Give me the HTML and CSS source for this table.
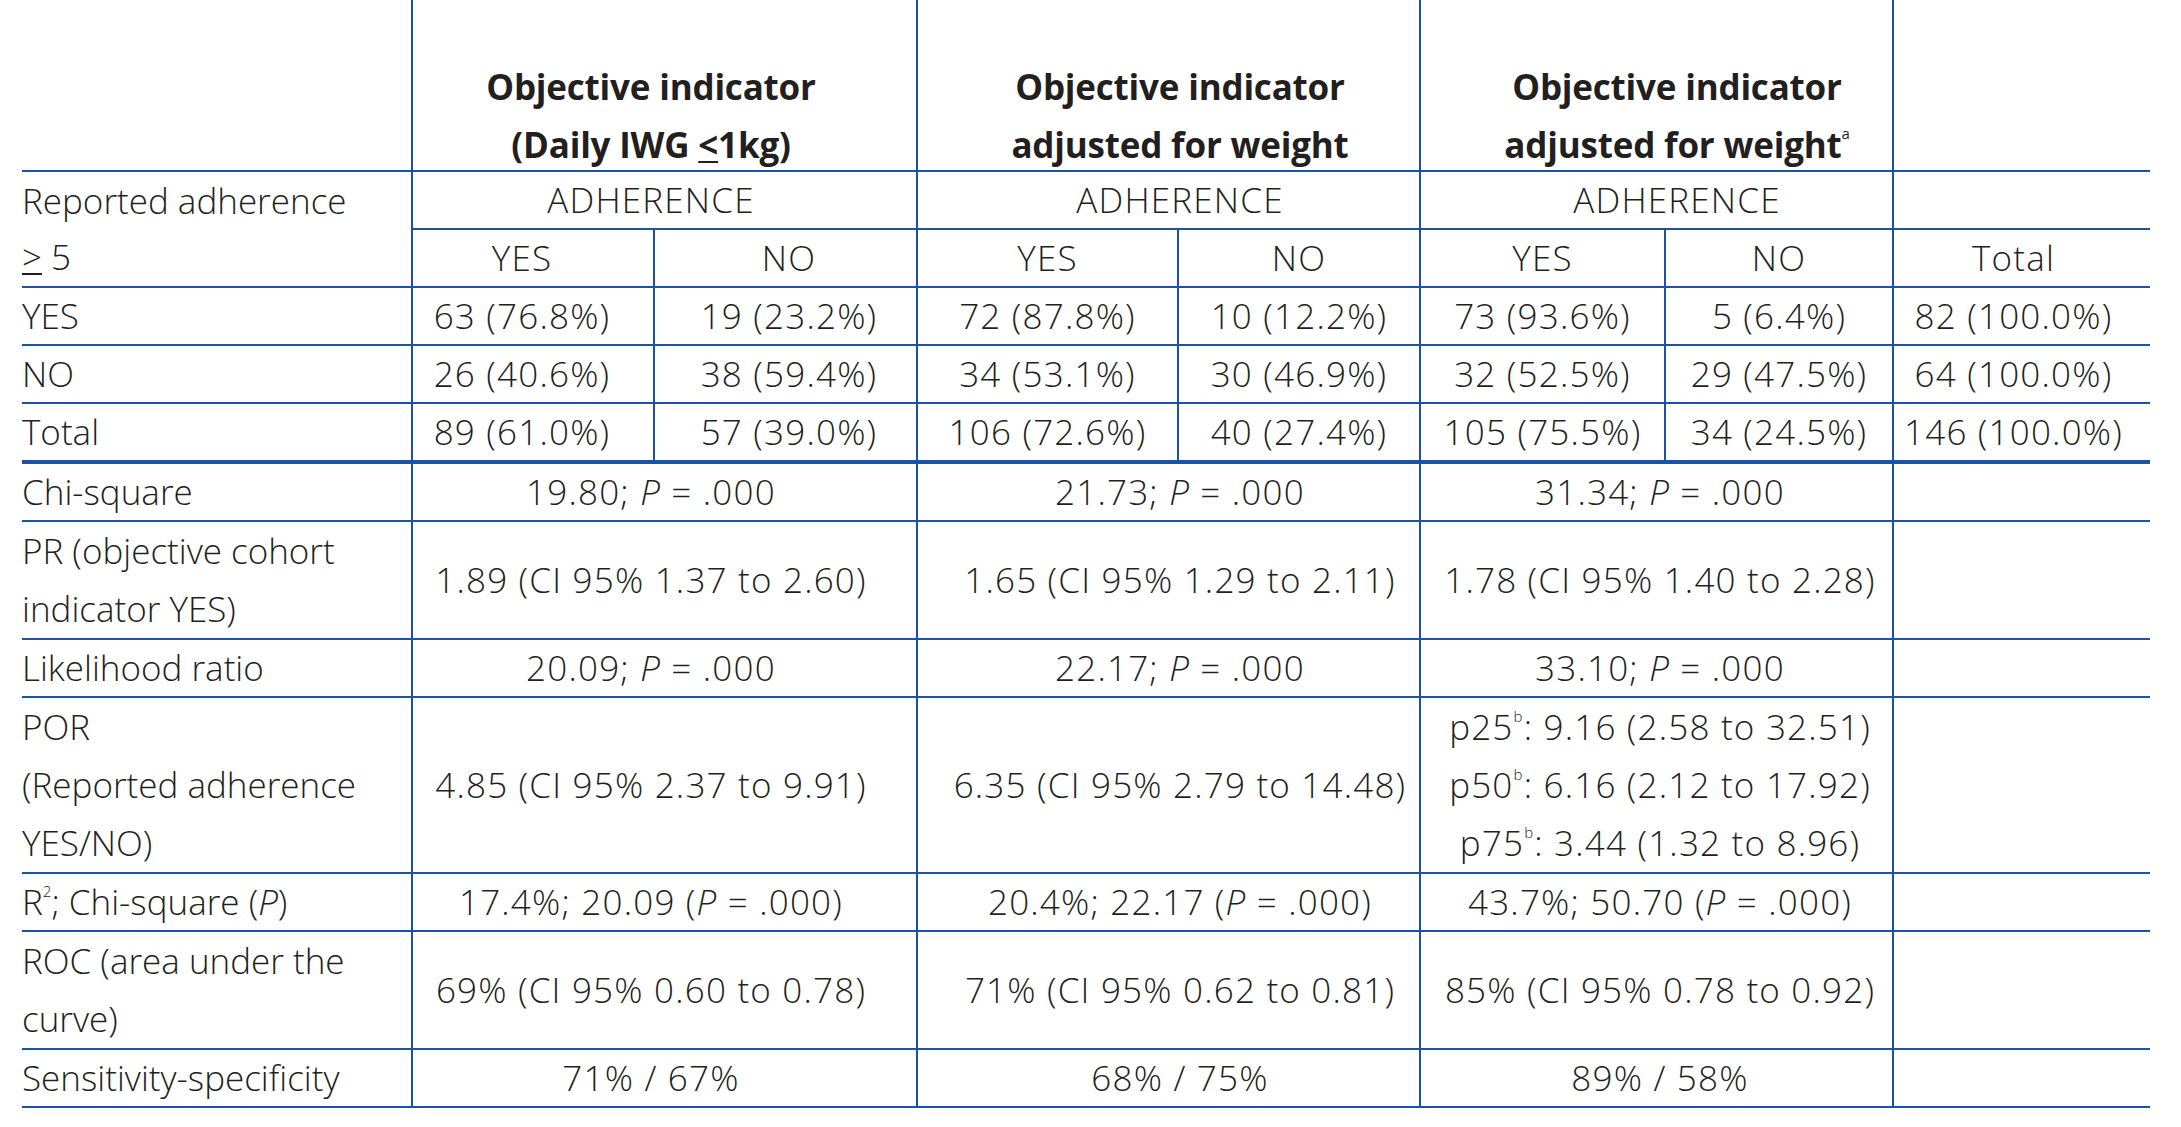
FILE: index.html
```html
<!DOCTYPE html>
<html lang="en">
<head>
<meta charset="utf-8">
<title>Adherence table</title>
<link rel="stylesheet" href="styles.css">
</head>
<body>
<table class="tbl">
  <colgroup>
    <col class="c0"><col class="c1"><col class="c2"><col class="c3"><col class="c4"><col class="c5"><col class="c6"><col class="c7">
  </colgroup>
  <tr class="head">
    <td class="lab"></td>
    <th colspan="2" class="bl g1"><span class="ht">Objective indicator<br>(Daily IWG <span class="ul">&lt;</span>1kg)</span></th>
    <th colspan="2" class="bl g2"><span class="ht">Objective indicator<br>adjusted for weight</span></th>
    <th colspan="2" class="bl g3h"><span class="ht">Objective indicator<br>adjusted for weight<sup class="sa">a</sup></span></th>
    <td class="bl"></td>
  </tr>
  <tr class="s">
    <td class="lab two" rowspan="2">Reported adherence<br><span class="ul">&gt;</span> 5</td>
    <td colspan="2" class="bl g1">ADHERENCE</td>
    <td colspan="2" class="bl g2">ADHERENCE</td>
    <td colspan="2" class="bl g3h">ADHERENCE</td>
    <td class="bl"></td>
  </tr>
  <tr class="s">
    <td class="bl y1">YES</td><td class="bl n1">NO</td>
    <td class="bl">YES</td><td class="bl">NO</td>
    <td class="bl">YES</td><td class="bl">NO</td>
    <td class="bl tot">Total</td>
  </tr>
  <tr class="s">
    <td class="lab">YES</td>
    <td class="bl y1">63 (76.8%)</td><td class="bl n1">19 (23.2%)</td>
    <td class="bl">72 (87.8%)</td><td class="bl">10 (12.2%)</td>
    <td class="bl">73 (93.6%)</td><td class="bl">5 (6.4%)</td>
    <td class="bl tot">82 (100.0%)</td>
  </tr>
  <tr class="s">
    <td class="lab">NO</td>
    <td class="bl y1">26 (40.6%)</td><td class="bl n1">38 (59.4%)</td>
    <td class="bl">34 (53.1%)</td><td class="bl">30 (46.9%)</td>
    <td class="bl">32 (52.5%)</td><td class="bl">29 (47.5%)</td>
    <td class="bl tot">64 (100.0%)</td>
  </tr>
  <tr class="s thick">
    <td class="lab">Total</td>
    <td class="bl y1">89 (61.0%)</td><td class="bl n1">57 (39.0%)</td>
    <td class="bl">106 (72.6%)</td><td class="bl">40 (27.4%)</td>
    <td class="bl">105 (75.5%)</td><td class="bl">34 (24.5%)</td>
    <td class="bl tot">146 (100.0%)</td>
  </tr>
  <tr class="s">
    <td class="lab">Chi-square</td>
    <td colspan="2" class="bl g1">19.80; <i>P</i> = .000</td>
    <td colspan="2" class="bl g2">21.73; <i>P</i> = .000</td>
    <td colspan="2" class="bl g3">31.34; <i>P</i> = .000</td>
    <td class="bl"></td>
  </tr>
  <tr>
    <td class="lab">PR (objective cohort<br>indicator YES)</td>
    <td colspan="2" class="bl g1">1.89 (CI 95% 1.37 to 2.60)</td>
    <td colspan="2" class="bl g2">1.65 (CI 95% 1.29 to 2.11)</td>
    <td colspan="2" class="bl g3">1.78 (CI 95% 1.40 to 2.28)</td>
    <td class="bl"></td>
  </tr>
  <tr class="s">
    <td class="lab">Likelihood ratio</td>
    <td colspan="2" class="bl g1">20.09; <i>P</i> = .000</td>
    <td colspan="2" class="bl g2">22.17; <i>P</i> = .000</td>
    <td colspan="2" class="bl g3">33.10; <i>P</i> = .000</td>
    <td class="bl"></td>
  </tr>
  <tr>
    <td class="lab">POR<br>(Reported adherence<br>YES/NO)</td>
    <td colspan="2" class="bl g1">4.85 (CI 95% 2.37 to 9.91)</td>
    <td colspan="2" class="bl g2">6.35 (CI 95% 2.79 to 14.48)</td>
    <td colspan="2" class="bl g3">p25<sup class="sb">b</sup>: 9.16 (2.58 to 32.51)<br>p50<sup class="sb">b</sup>: 6.16 (2.12 to 17.92)<br>p75<sup class="sb">b</sup>: 3.44 (1.32 to 8.96)</td>
    <td class="bl"></td>
  </tr>
  <tr class="s">
    <td class="lab">R<sup class="sb">2</sup>; Chi-square (<i>P</i>)</td>
    <td colspan="2" class="bl g1">17.4%; 20.09 (<i>P</i> = .000)</td>
    <td colspan="2" class="bl g2">20.4%; 22.17 (<i>P</i> = .000)</td>
    <td colspan="2" class="bl g3">43.7%; 50.70 (<i>P</i> = .000)</td>
    <td class="bl"></td>
  </tr>
  <tr>
    <td class="lab">ROC (area under the<br>curve)</td>
    <td colspan="2" class="bl g1">69% (CI 95% 0.60 to 0.78)</td>
    <td colspan="2" class="bl g2">71% (CI 95% 0.62 to 0.81)</td>
    <td colspan="2" class="bl g3">85% (CI 95% 0.78 to 0.92)</td>
    <td class="bl"></td>
  </tr>
  <tr class="s">
    <td class="lab">Sensitivity-specificity</td>
    <td colspan="2" class="bl g1">71% / 67%</td>
    <td colspan="2" class="bl g2">68% / 75%</td>
    <td colspan="2" class="bl g3">89% / 58%</td>
    <td class="bl"></td>
  </tr>
</table>
</body>
</html>
```
FILE: styles.css
```css
html, body {
  margin: 0;
  padding: 0;
  background: #ffffff;
}
body {
  padding-left: 22px;
  font-family: "Open Sans", "Noto Sans", "Liberation Sans", sans-serif;
  font-weight: 350;
  color: #231f20;
}
.tbl {
  border-collapse: collapse;
  table-layout: fixed;
  width: 2128px;
  font-size: 35px;
}
.c0 { width: 390px; }
.c1 { width: 242px; }
.c2 { width: 263px; }
.c3 { width: 261px; }
.c4 { width: 242px; }
.c5 { width: 245px; }
.c6 { width: 228px; }
.c7 { width: 257px; }

.tbl td, .tbl th {
  padding: 0;
  line-height: 58px;
  text-align: center;
  vertical-align: middle;
  white-space: nowrap;
  border-bottom: 2px solid #1d51a3;
  letter-spacing: 1.2px;
}
.tbl .bl { border-left: 2px solid #1d51a3; }
.tbl td.lab {
  text-align: left;
  border-left: none;
  letter-spacing: 0;
}
.tbl tr.s td { line-height: 56px; }
.tbl td.two { line-height: 57px; }

.head td, .head th {
  height: 170px;
  vertical-align: bottom;
}
.head th {
  font-weight: 700;
  font-size: 35px;
  letter-spacing: -0.2px;
}
.ht {
  display: block;
  margin-bottom: -4px;
}
.thick td { border-bottom: 4px solid #1d51a3; }

.g1 { padding-right: 27px !important; }
.g2 { padding-left: 23px !important; }
.g3h { padding-left: 41px !important; }
.g3 { padding-left: 7px !important; }
.y1 { padding-right: 22px !important; }
.n1 { padding-left: 7px !important; }
.tot { padding-right: 17px !important; }

.ul {
  text-decoration: underline;
  text-decoration-thickness: 2px;
  text-underline-offset: 3px;
}
i { font-style: italic; }
sup {
  line-height: 0;
  vertical-align: baseline;
  position: relative;
}
.sa {
  font-size: 15px;
  top: -19px;
  font-weight: 400;
}
.sb {
  font-size: 15px;
  top: -18px;
}
```
